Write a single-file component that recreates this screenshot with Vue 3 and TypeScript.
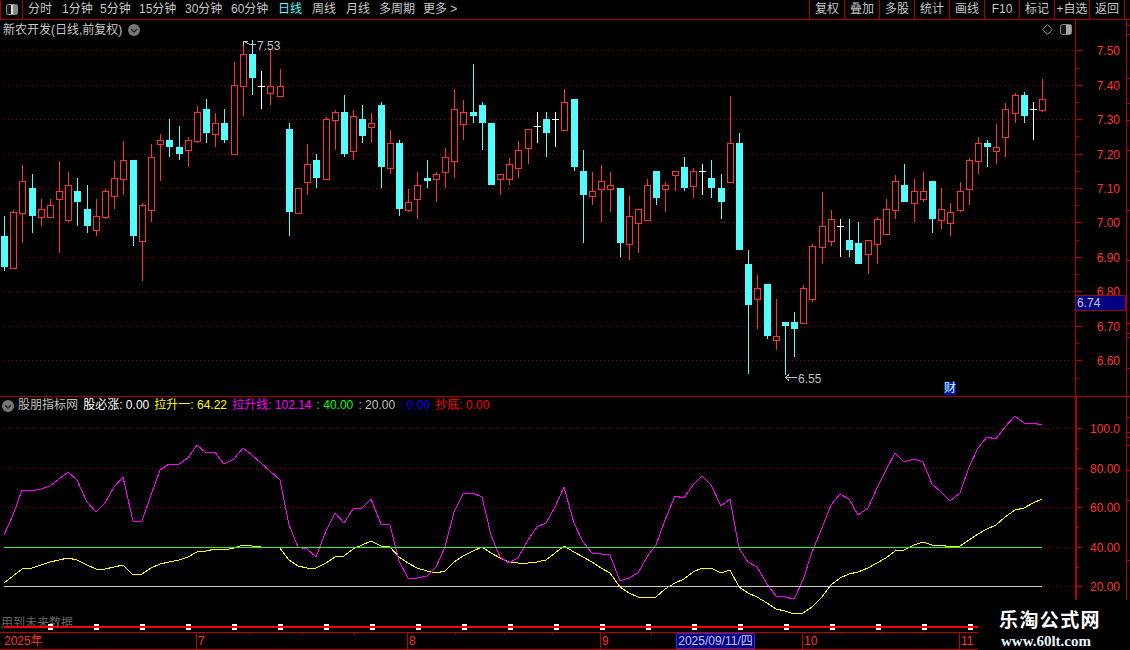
<script setup lang="ts">
import { computed } from 'vue'

type Kind = 'r' | 'c' | 'w'
type Candle = [number, number, number, number, number, Kind]

const periods = [
  { t: '分时' }, { t: '1分钟' }, { t: '5分钟' }, { t: '15分钟' }, { t: '30分钟' }, { t: '60分钟' },
  { t: '日线', on: true }, { t: '周线' }, { t: '月线' }, { t: '多周期' }, { t: '更多 >' },
]
const tools = ['复权', '叠加', '多股', '统计', '画线', 'F10', '标记', '+自选', '返回']

const candles: Candle[] = [
  [4,216,236,267,271,'c'],[13,210,212,268,268,'r'],[22,165,181,213,243,'r'],[32,174,188,216,233,'c'],
  [41,199,209,217,226,'r'],[50,199,205,217,217,'r'],[59,161,191,199,253,'r'],[68,172,185,220,222,'r'],
  [77,178,191,202,226,'c'],[87,185,209,226,233,'c'],[96,199,216,230,236,'r'],[105,189,191,217,219,'r'],
  [114,161,178,196,209,'r'],[123,141,160,179,195,'r'],[133,160,160,236,246,'c'],[142,203,205,241,281,'r'],
  [151,144,157,210,222,'r'],[160,134,140,144,181,'r'],[169,119,140,147,157,'c'],[179,126,147,154,160,'c'],
  [188,137,140,150,167,'r'],[197,106,112,141,143,'r'],[206,99,109,133,143,'c'],[215,113,123,134,147,'r'],
  [224,109,123,140,143,'c'],[234,62,85,154,154,'r'],[243,42,54,86,116,'r'],[252,40,54,78,95,'c'],
  [261,71,86,86,109,'w'],[270,49,86,93,105,'r'],[280,69,86,96,96,'r'],[289,123,129,212,236,'c'],
  [298,188,188,213,213,'r'],[307,144,164,182,195,'r'],[316,154,160,178,188,'c'],[326,117,119,179,179,'r'],
  [335,110,112,120,150,'r'],[344,95,112,154,157,'c'],[353,110,116,151,160,'r'],[362,105,119,136,143,'c'],
  [371,113,123,127,143,'r'],[381,102,105,167,188,'c'],[390,130,143,168,174,'r'],[399,140,143,209,216,'c'],
  [408,189,202,210,212,'r'],[417,172,185,199,219,'r'],[427,160,178,181,188,'c'],[436,172,174,179,202,'r'],
  [445,148,157,172,188,'r'],[454,89,109,161,178,'r'],[463,100,112,124,140,'r'],[473,64,112,116,123,'c'],
  [482,102,105,123,150,'c'],[491,123,123,185,185,'c'],[500,174,174,179,195,'r'],[509,158,164,179,185,'r'],
  [518,141,150,168,178,'r'],[528,129,129,148,164,'r'],[537,112,126,126,143,'w'],[546,112,119,133,157,'c'],
  [555,112,119,119,147,'w'],[564,89,102,130,130,'r'],[574,99,99,167,171,'c'],[583,150,171,195,243,'c'],
  [592,172,191,196,205,'r'],[601,165,181,189,222,'r'],[610,172,185,189,212,'r'],[620,188,188,243,257,'c'],
  [629,196,216,244,260,'r'],[638,209,209,223,253,'r'],[647,179,185,220,220,'r'],[656,171,171,198,205,'c'],
  [665,182,185,189,212,'r'],[675,171,171,175,191,'r'],[684,157,167,188,191,'c'],[693,168,171,186,198,'r'],
  [702,164,171,171,195,'w'],[711,160,178,188,198,'c'],[721,174,188,202,219,'c'],[730,96,143,182,182,'r'],
  [739,133,143,250,250,'c'],[748,250,264,305,374,'c'],[757,275,288,299,329,'r'],[767,284,284,336,339,'c'],
  [776,299,336,340,350,'r'],[785,322,322,326,375,'c'],[794,312,322,329,357,'c'],[803,285,288,323,323,'r'],
  [812,244,246,299,302,'r'],[822,192,226,247,264,'r'],[831,210,219,241,246,'r'],[840,219,226,226,257,'w'],
  [849,219,240,250,257,'c'],[858,222,243,264,264,'c'],[868,240,240,254,274,'r'],[877,217,219,244,264,'r'],
  [886,199,209,234,234,'r'],[895,175,181,210,219,'r'],[904,164,185,202,202,'c'],[914,179,191,203,222,'r'],
  [923,172,191,199,202,'r'],[932,181,181,219,233,'c'],[941,188,209,220,229,'r'],[950,203,212,223,236,'r'],
  [960,182,191,210,212,'r'],[969,158,160,189,205,'r'],[978,137,143,161,174,'r'],[987,140,143,147,167,'c'],
  [996,124,147,151,164,'r'],[1005,103,109,137,157,'r'],[1015,93,95,113,123,'r'],[1024,92,95,116,123,'c'],
  [1033,102,109,109,140,'w'],[1042,79,99,110,112,'r'],
]

// Samples of the two indicator series, one per candle, in thirds of a pixel below y=410.
const riseSamples = [
  376,316,241,244,237,227,208,187,210,275,307,280,230,200,334,334,255,180,162,162,145,106,130,127,163,147,115,135,160,182,
  210,345,410,416,440,362,310,340,298,295,268,342,346,452,505,505,497,470,410,305,253,250,262,375,440,460,445,390,350,340,
  290,230,340,395,430,433,436,512,503,490,440,405,330,257,265,226,199,225,288,268,413,455,470,523,559,562,566,510,425,355,
  285,253,267,316,295,235,180,130,155,148,155,222,245,273,250,170,113,82,88,50,19,40,40,44,
]
const firstSamples = [
  518,498,478,475,465,457,451,445,449,465,478,478,471,466,496,492,475,462,456,449,440,425,424,418,421,415,406,409,412,412,
  415,450,467,475,475,460,442,438,418,405,394,409,410,440,458,474,483,490,484,455,437,424,412,430,445,455,460,460,455,450,
  430,407,425,440,455,473,490,530,548,562,562,562,538,518,508,485,475,475,490,481,530,548,560,580,598,603,613,610,590,560,
  525,505,492,485,475,460,445,424,420,405,397,406,406,412,408,390,372,358,345,320,300,293,278,268,
]
const toPoints = (s: number[]) => s.map((v, i) => `${candles[i][0]},${Math.round(410 + v / 3)}`).join(' ')
const risePoints = computed(() => toPoints(riseSamples))
const firstPoints = computed(() => toPoints(firstSamples))

const priceGrid = [50, 85, 119, 154, 188, 222, 257, 291, 326, 360]
const priceLabels = [
  { y: 50, t: '7.50' }, { y: 85, t: '7.40' }, { y: 119, t: '7.30' }, { y: 154, t: '7.20' }, { y: 188, t: '7.10' },
  { y: 222, t: '7.00' }, { y: 257, t: '6.90' }, { y: 291, t: '6.80' }, { y: 326, t: '6.70' }, { y: 360, t: '6.60' },
]
const priceMinor = [68, 102, 136, 171, 205, 240, 274, 308, 343, 378]
const stripTicks = [25, 34, 78, 103, 120, 150, 210, 260, 323, 333, 337, 368]
const indGrid = [428, 468, 507, 547, 586]
const indLabels = [
  { y: 428, t: '100.0' }, { y: 468, t: '80.00' }, { y: 507, t: '60.00' }, { y: 547, t: '40.00' }, { y: 586, t: '20.00' },
]
const indMinor = [448, 488, 527, 567]
const indStripTicks = [417, 432, 437, 445, 470, 500, 560]
const markers = Array.from({ length: 21 }, (_, i) => 48 + i * 46)
const monthCells = ['2025年', '7', '8', '9', '10', '11']
const dateTicks = [249, 302, 354, 455, 504, 552, 651, 841, 881, 921]
</script>

<template>
  <div class="screen">
    <header class="toolbar">
      <div class="layout-btn">
        <svg width="12" height="11" viewBox="0 0 12 11">
          <rect x="0.5" y="0.5" width="11" height="10" rx="2" fill="#1a1a1a" stroke="#999" />
          <rect x="5" y="1" width="2" height="9" fill="#e0e0e0" />
          <rect x="7" y="1" width="4" height="9" fill="#8a8a8a" />
        </svg>
      </div>
      <nav class="periods">
        <span v-for="p in periods" :key="p.t" :class="{ active: p.on }">{{ p.t }}</span>
      </nav>
      <nav class="tools">
        <span v-for="t in tools" :key="t" class="tool">{{ t }}</span>
      </nav>
    </header>

    <section class="pane price-pane">
      <div class="plot">
        <svg class="plot-svg" width="1075" height="376" viewBox="0 20 1075 376">
          <line v-for="y in priceGrid" :key="y" x1="4" x2="1075" :y1="y + 0.5" :y2="y + 0.5" class="dots" />
          <g v-for="c in candles" :key="c[0]">
            <template v-if="c[5] === 'r'">
              <rect :x="c[0]" :y="c[1]" width="1" :height="c[2] - c[1]" class="up" />
              <rect :x="c[0]" :y="c[3]" width="1" :height="c[4] - c[3]" class="up" />
              <rect :x="c[0] - 2.5" :y="c[2] + 0.5" width="6" :height="c[3] - c[2]" class="up-body" />
            </template>
            <template v-else-if="c[5] === 'c'">
              <rect :x="c[0]" :y="c[1]" width="1" :height="c[4] - c[1]" class="down" />
              <rect :x="c[0] - 3" :y="c[2]" width="7" :height="c[3] - c[2]" class="down" />
            </template>
            <template v-else>
              <rect :x="c[0]" :y="c[1]" width="1" :height="c[4] - c[1]" class="flat" />
              <rect :x="c[0] - 3" :y="c[2]" width="7" height="1" class="flat" />
            </template>
          </g>
          <path d="M243.5 46V41.5H248M243.5 41.5L250.5 44.5H256" class="pointer" />
          <text x="257" y="50" class="note">7.53</text>
          <path d="M785.5 377.5H797M785.5 377.5L789 374.5M785.5 377.5L789 380.5" class="pointer" />
          <text x="798" y="383" class="note">6.55</text>
          <path d="M1047.5 24.5L1052.5 29.5L1047.5 34.5L1042.5 29.5Z" class="diamond" />
          <rect x="1060.5" y="24.5" width="11" height="10" rx="2" fill="#141414" stroke="#8a8a8a" />
          <rect x="1066" y="25" width="5" height="9" fill="#a8a8a8" />
        </svg>
        <div class="title">
          <span>新农开发(日线,前复权)</span>
          <svg class="chev" width="12" height="12" viewBox="0 0 12 12">
            <circle cx="6" cy="6" r="6" fill="#777" />
            <path d="M3 5L6 8L9 5" fill="none" stroke="#222" stroke-width="1.4" />
          </svg>
        </div>
        <span class="news">财</span>
      </div>
      <svg class="axis" width="55" height="376" viewBox="1075 20 55 376">
        <rect x="1075" y="20" width="1" height="376" class="axis-line" />
        <rect x="1126" y="20" width="1" height="376" class="axis-line" />
        <rect v-for="y in stripTicks" :key="y" x="1127" :y="y" width="3" height="1" class="axis-line" />
        <rect v-for="l in priceLabels" :key="l.y" x="1076" :y="l.y" width="6" height="1" class="axis-line" />
        <rect v-for="y in priceMinor" :key="y" x="1076" :y="y" width="3" height="1" class="axis-line" />
        <text v-for="l in priceLabels" :key="l.t" x="1120" :y="l.y + 5" class="tick-text">{{ l.t }}</text>
      </svg>
      <div class="last-price">6.74</div>
    </section>

    <section class="pane ind-pane">
      <div class="plot">
        <svg class="plot-svg" width="1075" height="235" viewBox="0 397 1075 235">
          <line v-for="y in indGrid" :key="y" x1="4" x2="1075" :y1="y + 0.5" :y2="y + 0.5" class="dots" />
          <polyline :points="firstPoints" class="series first" />
          <polyline :points="risePoints" class="series rise" />
          <rect x="4" y="547" width="1038" height="1" class="level-40" />
          <rect x="4" y="586" width="1038" height="1" class="level-20" />
          <text x="1" y="627" class="warn">用到未来数据</text>
          <rect v-for="x in markers" :key="x" :x="x" y="624" width="5" height="6" class="marker" />
          <rect x="4" y="626" width="974" height="2" class="future" />
        </svg>
        <div class="legend">
          <svg class="chev" width="12" height="12" viewBox="0 0 12 12">
            <circle cx="6" cy="6" r="6" fill="#777" />
            <path d="M3 5L6 8L9 5" fill="none" stroke="#222" stroke-width="1.4" />
          </svg>
          <span class="c-gray name">股朋指标网</span>
          <span class="c-white">股必涨: 0.00</span>
          <span class="c-yellow">拉升一: 64.22</span>
          <span class="c-magenta">拉升线: 102.14</span>
          <span class="c-green">: 40.00</span>
          <span class="c-gray">: 20.00</span>
          <span class="c-blue">: 0.00</span>
          <span class="c-red">抄底: 0.00</span>
        </div>
      </div>
      <svg class="axis" width="55" height="235" viewBox="1075 397 55 235">
        <rect x="1075" y="397" width="2" height="235" class="axis-line" />
        <rect x="1126" y="397" width="1" height="235" class="axis-line" />
        <rect v-for="y in indStripTicks" :key="y" x="1127" :y="y" width="3" height="1" class="axis-line" />
        <rect v-for="l in indLabels" :key="l.y" x="1076" :y="l.y" width="6" height="1" class="axis-line" />
        <rect v-for="y in indMinor" :key="y" x="1076" :y="y" width="3" height="1" class="axis-line" />
        <text v-for="l in indLabels" :key="l.t" x="1120" :y="l.y + 5" class="tick-text">{{ l.t }}</text>
      </svg>
    </section>

    <footer class="dates">
      <span v-for="m in monthCells" :key="m" class="month">{{ m }}</span>
      <svg class="date-ticks" width="978" height="3" viewBox="0 0 978 3">
        <rect v-for="x in dateTicks" :key="x" :x="x" y="0" width="1" height="2" class="axis-line" />
      </svg>
      <span class="cursor-date">2025/09/11/四</span>
    </footer>

    <aside class="watermark">
      <div class="wm-title">乐淘公式网</div>
      <div class="wm-url">www.60lt.com</div>
    </aside>
  </div>
</template>

<style>
html, body { margin: 0; background: #000; }
</style>

<style scoped>
.screen {
  position: relative;
  width: 1130px;
  height: 650px;
  overflow: hidden;
  background: #000;
  color: #c8c8c8;
  font: 12px "Liberation Sans", "Noto Sans CJK SC", sans-serif;
  display: flex;
  flex-direction: column;
}
svg { display: block; }

.toolbar {
  height: 19px;
  border-bottom: 1px solid #a80000;
  display: flex;
  align-items: stretch;
  flex: none;
}
.layout-btn {
  width: 23px;
  border-left: 1px solid #a80000;
  border-right: 1px solid #a80000;
  box-sizing: border-box;
  display: flex;
  align-items: center;
  justify-content: center;
}
.periods {
  display: grid;
  grid-template-columns: 34px 38px 39px 46px 46px 47px 34px 34px 33px 44px auto;
  align-items: center;
  margin-left: 5px;
  line-height: 19px;
  white-space: nowrap;
}
.active { color: #54fcfc; }
.tools {
  margin-left: auto;
  margin-right: 5px;
  display: flex;
  border-right: 1px solid #a80000;
}
.tool {
  width: 35px;
  box-sizing: border-box;
  border-left: 1px solid #a80000;
  text-align: center;
  line-height: 18px;
  white-space: nowrap;
}

.pane { position: relative; display: flex; flex: none; }
.price-pane { height: 376px; border-bottom: 1px solid #a80000; }
.ind-pane { height: 235px; }
.plot { position: relative; width: 1075px; }

.dots { stroke: #900000; stroke-width: 1; stroke-dasharray: 1 3; shape-rendering: crispEdges; }
.up { fill: #ff3232; }
.up-body { fill: #000; stroke: #ff3232; stroke-width: 1; shape-rendering: crispEdges; }
.down { fill: #54fcfc; }
.flat { fill: #fff; }
.pointer { fill: none; stroke: #c0c0c0; stroke-width: 1; shape-rendering: crispEdges; }
.diamond { fill: none; stroke: #8a8a8a; stroke-width: 1; }
.note { fill: #c0c0c0; font-size: 12px; }
.axis-line { fill: #b40000; }
.tick-text { fill: #ff3232; font-size: 12px; text-anchor: end; }

.title {
  position: absolute;
  left: 3px;
  top: 1px;
  height: 18px;
  display: flex;
  align-items: center;
  gap: 6px;
  line-height: 18px;
  white-space: nowrap;
}
.news {
  position: absolute;
  left: 944px;
  top: 362px;
  width: 12px;
  height: 13px;
  background: #0a14a8;
  color: #bff;
  line-height: 13px;
  text-align: center;
}
.last-price {
  position: absolute;
  left: 1075px;
  top: 275px;
  width: 51px;
  height: 16px;
  box-sizing: border-box;
  border: 1px solid #a80000;
  background: #000080;
  color: #c8c8e0;
  line-height: 14px;
  padding-left: 1px;
}

.series { fill: none; stroke-width: 1; shape-rendering: crispEdges; }
.first { stroke: #ffff00; }
.rise { stroke: #ff00ff; }
.level-40 { fill: #33ee33; }
.level-20 { fill: #c8c8c8; }
.warn { fill: #666; font-size: 12px; }
.marker { fill: #fff; }
.future { fill: #f00; }

.legend {
  position: absolute;
  left: 2px;
  top: 0;
  height: 17px;
  display: flex;
  align-items: center;
  gap: 5.1px;
  white-space: nowrap;
  line-height: 17px;
}
.name { margin-left: -1px; }
.c-gray { color: #c0c0c0; }
.c-white { color: #fff; }
.c-yellow { color: #ffff00; }
.c-magenta { color: #ff00ff; }
.c-green { color: #00ff00; }
.c-blue { color: #0000ff; }
.c-red { color: #ff0000; }

.dates {
  position: relative;
  flex: none;
  width: 978px;
  height: 18px;
  box-sizing: border-box;
  border-top: 1px solid #c00000;
  border-bottom: 1px solid #c00000;
  display: grid;
  grid-template-columns: 196px 211px 193px 202px 157px 1fr;
  color: #ff3232;
  line-height: 16px;
}
.month { border-left: 1px solid #c00000; padding-left: 1px; }
.month:first-child { border-left: 0; padding-left: 4px; }
.date-ticks { position: absolute; left: 0; top: 0; }
.cursor-date {
  position: absolute;
  left: 676px;
  top: 0;
  width: 79px;
  height: 16px;
  box-sizing: border-box;
  background: #00008b;
  border: 1px solid #3030c0;
  color: #c8c8e0;
  text-align: center;
  line-height: 14px;
  white-space: nowrap;
}

.watermark {
  position: absolute;
  left: 978px;
  top: 600px;
  width: 152px;
  height: 50px;
  background: #000;
  display: flex;
  flex-direction: column;
  padding: 8px 0 0 21px;
  box-sizing: border-box;
  gap: 4px;
}
.wm-title {
  color: #fff;
  font: bold 19px/22px "Noto Sans CJK SC", sans-serif;
  letter-spacing: 1.4px;
  white-space: nowrap;
}
.wm-url {
  margin-left: 2px;
  color: #e4f6ff;
  font: bold 15px/15px "Liberation Serif", serif;
  white-space: nowrap;
}
</style>
